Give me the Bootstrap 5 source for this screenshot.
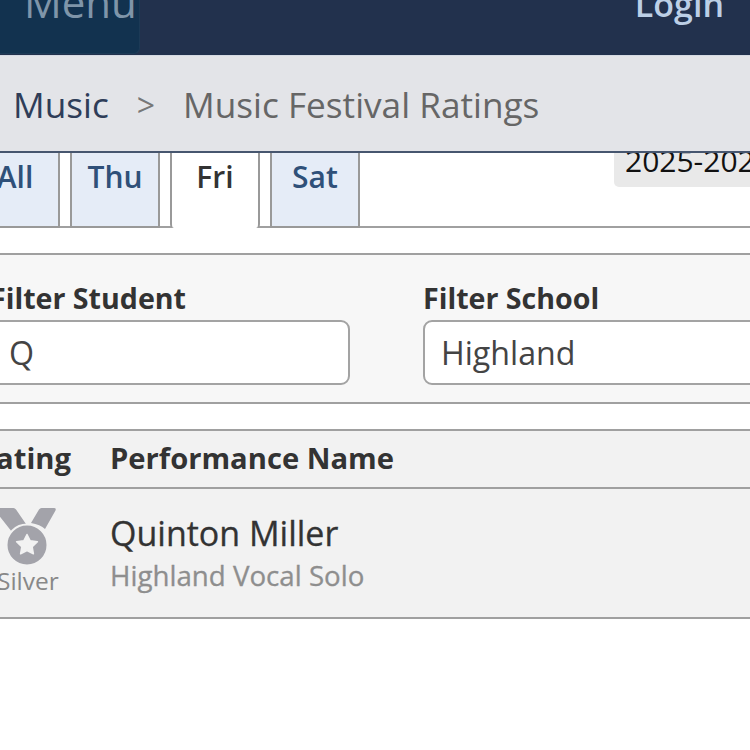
<!DOCTYPE html>
<html lang="en">
<head>
  <meta charset="UTF-8">
  <title>Music Festival Ratings</title>
  <link href="https://cdn.jsdelivr.net/npm/bootstrap@5.3.3/dist/css/bootstrap.min.css" rel="stylesheet">
  <style>
    html, body { height: 750px; overflow: hidden; }
    body { font-family: "Open Sans", "Noto Sans", sans-serif; background: #fff; color: #2b2b2b; }
    .top-bar { height: 55px; background: #22314d; overflow: hidden; padding-right: 26px; }
    .menu-btn { width: 150px; margin-left: -10px; padding-left: 33px; background: #12324f; border: 1px solid #1c3a56; border-top: 0; border-radius: 0 0 6px 0; color: #7f95a9; font-size: 42px; line-height: 44px; margin-top: -24px; padding-top: 4px; height: 78px; display: block; white-space: nowrap; text-decoration: none; }
    .login-link { color: #bccfe6; font-size: 34px; font-weight: 600; line-height: 34px; margin-top: -13px; text-decoration: none; }
    .crumbs { height: 98px; background: #e3e4e8; border-top: 1px solid #d5dae3; border-bottom: 2px solid #46566f; padding: 2px 0 0 13px; font-size: 35.200px; gap: 28px; color: #666; }
    .crumbs a { color: #2f3d58; text-decoration: none; }
    .crumbs .sep { font-size: 32px; color: #777; }
    .tab-row { height: 75px; border-bottom: 2px solid #a0a0a0; position: relative; }
    .day-tab { width: 90px; height: 75px; margin-right: 10px; background: #e5ecf7; border-right: 2px solid #999; border-left: 2px solid #999; border-bottom: 2px solid #999; color: #2f5079; font-size: 30px; font-weight: 600; line-height: 48px; text-align: center; text-decoration: none; display: block; }
    .day-tab.first-tab { margin-left: -30px; }
    .day-tab.now-tab { background: #fff; color: #333; border-bottom: 0; border-radius: 0 0 4px 4px; margin-bottom: -1px; }
    .year-tag { position: absolute; left: 614px; top: 0; width: 160px; height: 34px; background: #e9e9e9; border-radius: 0 0 0 5px; color: #111; font-size: 30px; line-height: 34px; padding-left: 11px; overflow: hidden; white-space: nowrap; }
    .year-tag span { display: block; margin-top: -9px; }
    .filter-box { margin-top: 25px; height: 151px; background: #f7f7f7; border-top: 2px solid #a0a0a0; border-bottom: 2px solid #a0a0a0; padding-top: 24px; gap: 73px; }
    .filter-col { flex: none; width: 370px; }
    .filter-col.first-col { margin-left: -20px; }
    .first-col .filter-label { margin-left: 10px; }
    .filter-label { display: block; margin: 0 0 4px; font-size: 28.600px; font-weight: 700; line-height: 37px; color: #333; }
    .filter-input { width: 100%; height: 65px; border: 2px solid #a3a3a3; border-radius: 9px; background: #fff; padding: 0 16px; font-size: 32.200px; color: #444; font-family: inherit; outline: 0; }
    .first-col .filter-input { padding-left: 27px; }
    .rate-box { margin-top: 25px; background: #f2f2f2; border-top: 2px solid #a0a0a0; border-bottom: 2px solid #a0a0a0; }
    .rate-head { height: 58px; border-bottom: 2px solid #a0a0a0; font-size: 29.200px; font-weight: 700; color: #333; }
    .rate-col { flex: none; width: 110px; }
    .rate-head .rate-col { text-align: right; padding-right: 39px; white-space: nowrap; direction: rtl; }
    .rate-line { height: 128px; }
    .medal-cell { width: 110px; flex: none; padding-top: 18px; }
    .medal-cell svg { display: block; width: 60px; height: 60px; margin-left: -1px; }
    .medal-text { display: block; margin-left: -3px; margin-top: -1px; font-size: 24.500px; line-height: 30px; color: #888; }
    .perf-name { font-size: 34px; line-height: 40px; margin-top: 24px; color: #333; -webkit-text-stroke: 0.3px #333; }
    .perf-sub { font-size: 27.700px; line-height: 36px; margin-top: 4px; color: #8e8e8e; -webkit-text-stroke: 0.3px #8e8e8e; }
  </style>
</head>
<body>

<div class="top-bar d-flex justify-content-between align-items-start">
  <a class="menu-btn" href="#">Menu</a>
  <a class="login-link" href="#">Login</a>
</div>

<div class="crumbs d-flex align-items-center">
  <a href="#">Music</a>
  <span class="sep">&gt;</span>
  <span>Music Festival Ratings</span>
</div>

<div class="tab-row d-flex">
  <a class="day-tab first-tab" href="#">All</a>
  <a class="day-tab" href="#">Thu</a>
  <a class="day-tab now-tab" href="#">Fri</a>
  <a class="day-tab" href="#">Sat</a>
  <div class="year-tag"><span>2025-2026</span></div>
</div>

<div class="filter-box d-flex">
  <div class="filter-col first-col">
    <label class="filter-label" for="studentBox">Filter Student</label>
    <input class="filter-input" id="studentBox" type="text" value="Q">
  </div>
  <div class="filter-col">
    <label class="filter-label" for="schoolBox">Filter School</label>
    <input class="filter-input" id="schoolBox" type="text" value="Highland">
  </div>
</div>

<div class="rate-box">
  <div class="rate-head d-flex align-items-center">
    <div class="rate-col">Rating</div>
    <div>Performance Name</div>
  </div>
  <div class="rate-line d-flex">
    <div class="medal-cell">
      <svg viewBox="0 0 60 60" aria-hidden="true">
        <path d="M-6 1H14.500Q16 1 17 2.500L27 17C21 18 16 21 13 25Z" fill="#a3a3aa"/>
        <path d="M42.500 1H55Q57.500 1 56.500 3.500L46 22C43 19 38 17 32 16L40 2.500Q41 1 42.500 1Z" fill="#a3a3aa"/>
        <circle cx="28" cy="38" r="20.500" fill="#a3a3aa" stroke="#f2f2f2" stroke-width="2"/>
        <path d="M28 27.500L31.200 33.800L38.400 34.800L33.200 39.800L34.400 46.800L28 43.500L21.600 46.800L22.800 39.800L17.600 34.800L24.800 33.800Z" fill="#f2f2f2" stroke="#f2f2f2" stroke-width="1.500" stroke-linejoin="round"/>
      </svg>
      <span class="medal-text">Silver</span>
    </div>
    <div>
      <div class="perf-name">Quinton Miller</div>
      <div class="perf-sub">Highland Vocal Solo</div>
    </div>
  </div>
</div>

<script src="https://cdn.jsdelivr.net/npm/bootstrap@5.3.3/dist/js/bootstrap.bundle.min.js"></script>
</body>
</html>
